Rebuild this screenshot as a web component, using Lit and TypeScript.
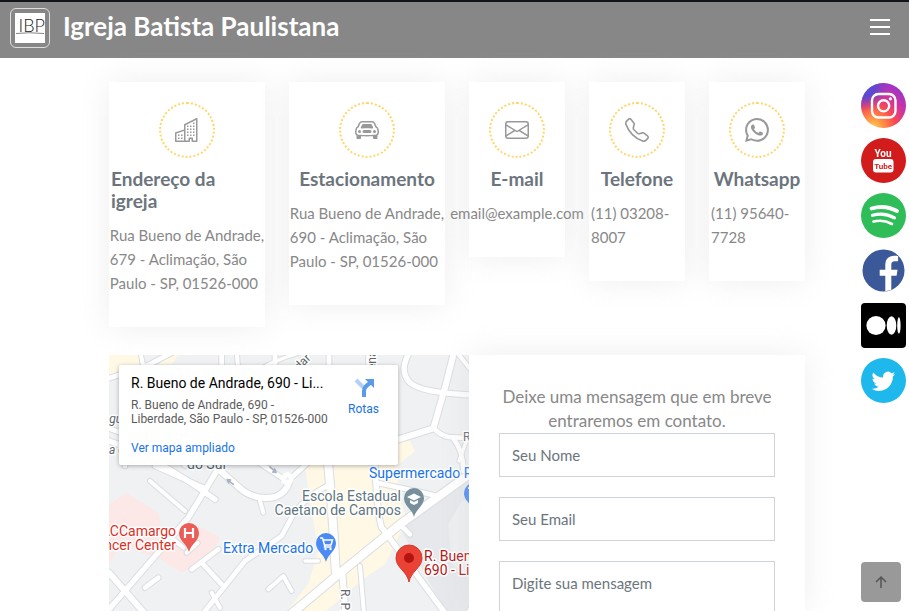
import { LitElement, html, css, svg } from "lit";
import { customElement } from "lit/decorators.js";

const icons = {
  building: svg`<path d="M14.763.075A.5.5 0 0 1 15 .5v15a.5.5 0 0 1-.5.5h-3a.5.5 0 0 1-.5-.5V14h-1v1.5a.5.5 0 0 1-.5.5h-9a.5.5 0 0 1-.5-.5V10a.5.5 0 0 1 .342-.474L6 7.64V4.5a.5.5 0 0 1 .276-.447l8-4a.5.5 0 0 1 .487.022zM6 8.694 1 10.36V15h5V8.694zM7 15h2v-1.5a.5.5 0 0 1 .5-.5h2a.5.5 0 0 1 .5.5V15h2V1.309l-7 3.5V15z"/><path d="M2 11h1v1H2v-1zm2 0h1v1H4v-1zm-2 2h1v1H2v-1zm2 0h1v1H4v-1zm4-4h1v1H8V9zm2 0h1v1h-1V9zm-2 2h1v1H8v-1zm2 0h1v1h-1v-1zm2-2h1v1h-1V9zm0 2h1v1h-1v-1zM8 7h1v1H8V7zm2 0h1v1h-1V7zm2 0h1v1h-1V7zM8 5h1v1H8V5zm2 0h1v1h-1V5zm2 0h1v1h-1V5zm0-2h1v1h-1V3z"/>`,
  car: svg`<path d="M4 9a1 1 0 1 1-2 0 1 1 0 0 1 2 0Zm10 0a1 1 0 1 1-2 0 1 1 0 0 1 2 0ZM6 8a1 1 0 0 0 0 2h4a1 1 0 1 0 0-2H6ZM4.862 4.276 3.906 6.19a.51.51 0 0 0 .497.731c.91-.073 2.35-.17 3.597-.17 1.247 0 2.688.097 3.597.17a.51.51 0 0 0 .497-.731l-.956-1.913A.5.5 0 0 0 10.691 4H5.309a.5.5 0 0 0-.447.276Z"/><path d="M2.52 3.515A2.5 2.5 0 0 1 4.82 2h6.362c1 0 1.904.596 2.298 1.515l.792 1.848c.075.175.21.319.38.404.5.25.855.715.965 1.262l.335 1.679c.033.161.049.325.049.49v.413c0 .814-.39 1.543-1 1.997V13.5a.5.5 0 0 1-.5.5h-2a.5.5 0 0 1-.5-.5v-1.338c-1.292.048-2.745.088-4 .088s-2.708-.04-4-.088V13.5a.5.5 0 0 1-.5.5h-2a.5.5 0 0 1-.5-.5v-1.892c-.61-.454-1-1.183-1-1.997v-.413a2.5 2.5 0 0 1 .049-.49l.335-1.68c.11-.546.465-1.012.964-1.261a.807.807 0 0 0 .381-.404l.792-1.848ZM4.82 3a1.5 1.5 0 0 0-1.379.91l-.792 1.847a1.8 1.8 0 0 1-.853.904.807.807 0 0 0-.43.564L1.03 8.904a1.5 1.5 0 0 0-.03.294v.413c0 .796.62 1.448 1.408 1.484 1.555.07 3.786.155 5.592.155 1.806 0 4.037-.084 5.592-.155A1.479 1.479 0 0 0 15 9.611v-.413c0-.099-.01-.197-.03-.294l-.335-1.68a.807.807 0 0 0-.43-.563 1.807 1.807 0 0 1-.853-.904l-.792-1.848A1.5 1.5 0 0 0 11.18 3H4.82Z"/>`,
  mail: svg`<path d="M0 4a2 2 0 0 1 2-2h12a2 2 0 0 1 2 2v8a2 2 0 0 1-2 2H2a2 2 0 0 1-2-2V4zm2-1a1 1 0 0 0-1 1v.217l7 4.2 7-4.2V4a1 1 0 0 0-1-1H2zm13 2.383-4.758 2.855L15 11.114v-5.73zm-.034 6.878L9.271 8.82 8 9.583 6.728 8.82l-5.694 3.44A1 1 0 0 0 2 13h12a1 1 0 0 0 .966-.739zM1 11.114l4.758-2.876L1 5.383v5.73z"/>`,
  phone: svg`<path d="M3.654 1.328a.678.678 0 0 0-1.015-.063L1.605 2.3c-.483.484-.661 1.169-.45 1.77a17.568 17.568 0 0 0 4.168 6.608 17.569 17.569 0 0 0 6.608 4.168c.601.211 1.286.033 1.77-.45l1.034-1.034a.678.678 0 0 0-.063-1.015l-2.307-1.794a.678.678 0 0 0-.58-.122l-2.19.547a1.745 1.745 0 0 1-1.657-.459L5.482 8.062a1.745 1.745 0 0 1-.46-1.657l.548-2.19a.678.678 0 0 0-.122-.58L3.654 1.328zM1.884.511a1.745 1.745 0 0 1 2.612.163L6.29 2.98c.329.423.445.974.315 1.494l-.547 2.19a.678.678 0 0 0 .178.643l2.457 2.457a.678.678 0 0 0 .644.178l2.189-.547a1.745 1.745 0 0 1 1.494.315l2.306 1.794c.829.645.905 1.87.163 2.611l-1.034 1.034c-.74.74-1.846 1.065-2.877.702a18.634 18.634 0 0 1-7.01-4.42 18.634 18.634 0 0 1-4.42-7.009c-.362-1.03-.037-2.137.703-2.877L1.885.511z"/>`,
  whatsapp: svg`<path d="M13.601 2.326A7.854 7.854 0 0 0 7.994 0C3.627 0 .068 3.558.064 7.926c0 1.399.366 2.76 1.057 3.965L0 16l4.204-1.102a7.933 7.933 0 0 0 3.79.965h.004c4.368 0 7.926-3.558 7.93-7.93A7.898 7.898 0 0 0 13.6 2.326zM7.994 14.521a6.573 6.573 0 0 1-3.356-.92l-.24-.144-2.494.654.666-2.433-.156-.251a6.56 6.56 0 0 1-1.007-3.505c0-3.626 2.957-6.584 6.591-6.584a6.56 6.56 0 0 1 4.66 1.931 6.557 6.557 0 0 1 1.928 4.66c-.004 3.639-2.961 6.592-6.592 6.592zm3.615-4.934c-.197-.099-1.17-.578-1.353-.646-.182-.065-.315-.099-.445.099-.133.197-.513.646-.627.775-.114.133-.232.148-.43.05-.197-.1-.836-.308-1.592-.985-.59-.525-.985-1.175-1.103-1.372-.114-.198-.011-.304.088-.403.087-.088.197-.232.296-.346.1-.114.133-.198.198-.33.065-.134.034-.248-.015-.347-.05-.099-.445-1.076-.612-1.47-.16-.389-.323-.335-.445-.34-.114-.007-.247-.007-.38-.007a.729.729 0 0 0-.529.247c-.182.198-.691.677-.691 1.654 0 .977.71 1.916.81 2.049.098.133 1.394 2.132 3.383 2.992.47.205.84.326 1.129.418.475.152.904.129 1.246.08.38-.058 1.171-.48 1.338-.943.164-.464.164-.86.114-.943-.049-.084-.182-.133-.38-.232z"/>`,
};

const cards = [
  { icon: icons.building, title: "Endereço da igreja", text: "Rua Bueno de Andrade,\n679 - Aclimação, São\nPaulo - SP, 01526-000", wide: true },
  { icon: icons.car, title: "Estacionamento", text: "Rua Bueno de Andrade,\n690 - Aclimação, São\nPaulo - SP, 01526-000", wide: true },
  { icon: icons.mail, title: "E-mail", text: "email@example.com", wide: false },
  { icon: icons.phone, title: "Telefone", text: "(11) 03208-8007", wide: false },
  { icon: icons.whatsapp, title: "Whatsapp", text: "(11) 95640-7728", wide: false },
];

const socials = [
  {
    name: "Instagram",
    art: svg`<defs>
        <radialGradient id="ig" cx="12" cy="45" r="45" gradientUnits="userSpaceOnUse">
          <stop offset="0" stop-color="#ffd35a"/><stop offset=".2" stop-color="#ff9a45"/>
          <stop offset=".5" stop-color="#fb4a50"/><stop offset=".75" stop-color="#cf34a0"/>
          <stop offset="1" stop-color="#a334c4"/>
        </radialGradient>
        <radialGradient id="igb" cx="2" cy="2" r="26" gradientUnits="userSpaceOnUse">
          <stop offset="0" stop-color="#3b5ce0"/><stop offset=".5" stop-color="#5a48d0" stop-opacity=".9"/>
          <stop offset="1" stop-color="#8a3ac8" stop-opacity="0"/>
        </radialGradient>
      </defs>
      <circle cx="22.5" cy="22.5" r="22.5" fill="url(#ig)"/><circle cx="22.5" cy="22.5" r="22.5" fill="url(#igb)"/>
      <rect x="11" y="11" width="23.5" height="23.5" rx="6.5" fill="none" stroke="#fff" stroke-width="2.4"/>
      <circle cx="22.6" cy="22.8" r="5.6" fill="none" stroke="#fff" stroke-width="2.4"/><circle cx="29.4" cy="15.8" r="1.6" fill="#fff"/>`,
  },
  {
    name: "YouTube",
    art: svg`<circle cx="22.5" cy="22.5" r="22.5" fill="#d21b1b"/>
      <text class="yt" x="22" y="19" text-anchor="middle" fill="#fff">You</text>
      <rect x="12" y="21" width="20.5" height="13.5" rx="3" fill="#fff"/>
      <text class="yt tube" x="22.2" y="31" text-anchor="middle" fill="#d21b1b">Tube</text>`,
  },
  {
    name: "Spotify",
    art: svg`<circle cx="22.5" cy="22.5" r="22.5" fill="#2ebd59"/>
      <g fill="none" stroke="#fff" stroke-linecap="round">
        <path d="M10.5 15.5Q24 11.5 36 18" stroke-width="3.8"/><path d="M11.5 22.3Q23 18.9 33.5 24.8" stroke-width="3.2"/><path d="M12.5 28.6Q22 26 31 31" stroke-width="2.6"/>
      </g>`,
  },
  {
    name: "Facebook",
    art: svg`<circle cx="22.5" cy="22.5" r="21" fill="#3b5998"/>
      <path d="M24.3 43.3V27.8h-5.6v-6h5.6V17c0-5.8 3.3-9.3 8.8-9.3 1.9 0 3.1.1 4 .3v5.3h-3.3c-2.6 0-3.5 1.2-3.5 3.500v5h6.2l-.9 6h-5.3v14.300z" fill="#fff"/>`,
  },
  {
    name: "Medium",
    art: svg`<rect width="45" height="45" rx="4" fill="#000"/>
      <g fill="#fff"><circle cx="15" cy="22.5" r="9.6"/><ellipse cx="30.5" cy="22.5" rx="4.8" ry="9.2"/><ellipse cx="37.9" cy="22.5" rx="1.7" ry="8.2"/></g>`,
  },
  {
    name: "Twitter",
    art: svg`<circle cx="22.5" cy="22.5" r="22.5" fill="#1eb8ec"/>
      <g transform="translate(10.6 10.7) scale(1.48)"><path fill="#fff" d="M5.026 15c6.038 0 9.341-5.003 9.341-9.334 0-.14 0-.282-.006-.422A6.685 6.685 0 0 0 16 3.542a6.658 6.658 0 0 1-1.889.518 3.301 3.301 0 0 0 1.447-1.817 6.533 6.533 0 0 1-2.087.793A3.286 3.286 0 0 0 7.875 6.03a9.325 9.325 0 0 1-6.767-3.429 3.289 3.289 0 0 0 1.018 4.382A3.323 3.323 0 0 1 .64 6.575v.045a3.288 3.288 0 0 0 2.632 3.218 3.203 3.203 0 0 1-.865.115 3.23 3.23 0 0 1-.614-.057 3.283 3.283 0 0 0 3.067 2.277A6.588 6.588 0 0 1 .78 13.58a6.32 6.32 0 0 1-.78-.045A9.344 9.344 0 0 0 5.026 15z"/></g>`,
  },
];

// Road centre lines on a grid of a third of a map pixel: [line, width]
const roads: [string, number][] = [
  ["M12 82L130 42L210 0", 14],
  ["M105 0L118 60", 12],
  ["M350 0V60", 14],
  ["M395 0L400 60", 12],
  ["M455 60Q500 30 600 0", 10],
  ["M510 0V60", 14],
  ["M672 0V60", 14],
  ["M790 0V60", 12],
  ["M1062 12L1100 60", 12],
  ["M12 232L60 250V345", 14],
  ["M60 300Q200 290 240 345", 12],
  ["M12 270Q140 310 330 445", 16],
  ["M335 360L250 500L12 775", 16],
  ["M150 345L295 410", 14],
  ["M330 345L405 412Q450 450 510 438Q545 425 553 390", 18],
  ["M440 320L530 380", 14],
  ["M565 375L620 325", 14],
  ["M135 390L240 480", 12],
  ["M475 485L465 450", 12],
  ["M670 345Q683 480 692 660", 24],
  ["M665 405Q600 440 565 490L530 555L420 630L300 780", 14],
  ["M12 665L130 800", 18],
  ["M120 710L160 680", 14],
  ["M260 655L340 595", 14],
  ["M290 635L350 700", 14],
  ["M320 725L345 770", 12],
  ["M490 715L535 675L560 720", 12],
  ["M640 630H600", 10],
  ["M180 545L235 590", 12],
  ["M245 605L278 576", 12],
  ["M545 800L700 670L885 520L1100 365", 24],
  ["M712 665L722 800", 18],
  ["M765 645L778 800", 12],
  ["M880 265L985 232L1020 110L1045 12", 18],
  ["M915 0Q880 60 915 95Q950 125 1100 132", 16],
  ["M985 232Q1010 255 1030 258L1100 262", 14],
  ["M1045 262Q1075 300 1075 360", 14],
  ["M1090 255L1062 330", 10],
  ["M810 340Q815 480 830 530", 16],
  ["M815 395L955 425L995 435", 14],
  ["M835 535L1030 800", 16],
  ["M885 520L915 550", 14],
  ["M1085 790L1100 765", 10],
];

@customElement("app-root")
export class AppRoot extends LitElement {
  static styles = css`
    :host {
      display: flex;
      flex-direction: column;
      height: 100vh;
      overflow: hidden;
      background: #fff;
      color: #888;
      font-family: Lato, "Liberation Sans", sans-serif;
      font-size: 15px;
      line-height: 24px;
    }
    * { box-sizing: border-box; }
    svg { display: block; }
    .bar {
      flex: none;
      display: flex;
      align-items: flex-start;
      padding: 6px 18px 10px 10px;
      border-top: 2px solid #10151a;
      background: #878787;
    }
    .brand { display: flex; gap: 13px; text-decoration: none; color: #fff; }
    .logo { display: flex; padding: 4px; border: 1px solid #ddd; border-radius: 6px; }
    .logo text { font: 300 18px Lato, sans-serif; }
    .site { margin: 0; font-size: 26px; font-weight: 700; line-height: 36px; }
    .burger { margin: 8px 0 0 auto; padding: 0; border: 0; background: none; }
    main {
      flex: 1;
      display: flex;
      flex-direction: column;
      gap: 28px;
      width: 100%;
      max-width: 701px;
      min-height: 0;
      margin: 0 auto;
      padding: 24px 0 0 5px;
    }
    .cards { display: grid; grid-template-columns: repeat(12, 1fr); column-gap: 24px; align-items: start; }
    .card {
      grid-column: span 2;
      display: flex;
      flex-direction: column;
      align-items: center;
      min-width: 0;
      padding: 20px 2px 32px;
      background: #fff;
      box-shadow: 0 0 30px rgba(214, 215, 216, 0.4);
    }
    .card.wide { grid-column: span 3; }
    .card.wide p { white-space: pre; }
    .ring {
      display: grid;
      place-items: center;
      width: 56px;
      height: 56px;
      border: 2px dotted #ffd565;
      border-radius: 50%;
      fill: #999;
    }
    h2 { margin: 10px 0 11px; font-size: 19px; font-weight: 700; line-height: 22px; color: #6c757d; }
    .card p { margin: 0; }
    .contact { flex: 1; min-height: 0; display: grid; grid-template-columns: 15fr 14fr; }
    .map {
      position: relative;
      overflow: hidden;
      background: #eff1f3;
      font-family: Roboto, sans-serif;
      font-size: 12px;
      line-height: 14px;
    }
    .map > svg { width: 100%; height: 100%; }
    .label { font-size: 14px; paint-order: stroke; stroke: #fff; stroke-width: 3px; stroke-linejoin: round; }
    .street { font-size: 12px; fill: #5f6670; }
    .place {
      position: absolute;
      top: 10px;
      left: 10px;
      display: flex;
      justify-content: space-between;
      width: 279px;
      height: 100px;
      padding: 10px 19px 10px 12px;
      border-radius: 2px;
      background: #fff;
      box-shadow: 0 1px 4px rgba(0, 0, 0, 0.3);
      color: #5b5b5b;
    }
    .place h3 { margin: 0 0 7px; font-size: 14px; font-weight: 400; line-height: 16px; color: #000; }
    .place p { margin: 0 0 15px; }
    .place a { color: #1a73e8; text-decoration: none; }
    .info { width: 200px; }
    .route { display: flex; flex-direction: column; align-items: center; gap: 3px; }
    .form {
      position: relative;
      display: flex;
      flex-direction: column;
      gap: 20px;
      min-height: 0;
      padding: 30px;
      background: #fff;
      box-shadow: 0 0 30px rgba(214, 215, 216, 0.4);
    }
    .form p { margin: 0 0 -20px; font-size: 17px; text-align: center; }
    .field {
      flex: none;
      width: 100%;
      height: 44px;
      padding: 0 12px;
      border: 1px solid #ced4da;
      border-radius: 0;
      background: #fff;
      font: inherit;
      color: #212529;
    }
    textarea.field { height: 120px; padding: 9px 12px; resize: none; }
    .field::placeholder { color: #6c757d; opacity: 1; }
    .socials { position: fixed; top: 83px; right: 3px; display: flex; flex-direction: column; gap: 10px; }
    .yt { font: 700 10px Roboto, sans-serif; }
    .tube { font-size: 8px; }
    .top {
      position: fixed;
      right: 8px;
      bottom: 9px;
      display: grid;
      place-items: center;
      width: 40px;
      height: 40px;
      border-radius: 4px;
      background: #999;
    }
  `;

  private pin(x: number, y: number, fill: string, glyph: unknown) {
    return svg`<g transform="translate(${x} ${y})"><path d="M0 29C-2 21-10 18-10 10A10 10 0 0 1 10 10C10 18 2 21 0 29Z" fill=${fill}/>${glyph}</g>`;
  }

  private map() {
    const cart = svg`<path d="M-6 5h2.5l2 7h6.5l1.5-5h-9M-1 12l-.5 2h7" fill="none" stroke="#fff" stroke-width="1.5"/><circle cx="-.5" cy="16" r="1.2" fill="#fff"/><circle cx="4.5" cy="16" r="1.2" fill="#fff"/>`;
    return html`<svg viewBox="0 0 360 256" preserveAspectRatio="xMinYMin slice" role="img" aria-label="Mapa">
      <g transform="translate(-4 -4) scale(.33333)">
        <path fill="#e6e8eb" d="M885 530L1110 360V800H1030z"/>
        <path fill="#edeff1" d="M1030 520L1070 450L1110 440V690L1040 640z"/>
        <path fill="#fff8e5" d="M12 90L115 45V0H12zM600 342H880L930 300L912 265L875 250L880 420L905 510L840 640L780 680L640 800H530L610 700L640 600L610 420zM165 0L230 0L200 40H165z"/>
        <path fill="#fce8e6" d="M12 460L65 425L160 485L170 535L225 570L280 525L345 560L320 610L230 665L160 620L90 600L60 560L12 640z"/>
        <g fill="none" stroke-linecap="round" stroke-linejoin="round">
          ${roads.map(([d, w]) => svg`<path d=${d} stroke="#dadde2" stroke-width=${w + 6}/>`)}
          ${roads.map(([d, w]) => svg`<path d=${d} stroke="#fff" stroke-width=${w}/>`)}
          <circle cx="547" cy="383" r="12" fill="#eff1f3" stroke="#fff" stroke-width="14"/>
          <path d="M385 400L367 386M367 386l4 10M367 386l10 1M495 348L513 364M513 364l-4-10M513 364l-10-1" stroke="#a9b1c4" stroke-width="5"/>
        </g>
      </g>
      <g class="label">
        <text class="street" x="-6" y="68" font-style="italic">agu</text>
        <text class="street" x="0" y="99" font-style="italic">a c</text>
        <text class="street" transform="translate(190 16) rotate(-45)">dar</text>
        <text class="street" transform="translate(267 15) rotate(-90)">ena</text>
        <text class="street" x="354" y="86">R.</text>
        <text class="street" transform="translate(232 234) rotate(90)">R. Pires</text>
        <text x="78" y="114" fill="#546e7a">do Sul</text>
        <text x="260" y="123" fill="#1a73e8">Supermercado R</text>
        <text x="292" y="146" fill="#607580" text-anchor="end">Escola Estadual</text>
        <text x="292" y="160" fill="#607580" text-anchor="end">Caetano de Campos</text>
        <text x="67" y="181" fill="#d93025" text-anchor="end">ACCamargo</text>
        <text x="67" y="195" fill="#d93025" text-anchor="end">Cancer Center</text>
        <text x="114" y="198" fill="#1a73e8">Extra Mercado</text>
        <text x="315" y="206" fill="#b31412">R. Bueno</text>
        <text x="315" y="220" fill="#b31412">690 - Lib</text>
      </g>
      ${this.pin(305, 133, "#78909c", svg`<path d="M-7 9L0 5.5L7 9L0 12.5ZM-4 12v3L0 17L4 15v-3L0 14Z" fill="#fff"/>`)}
      ${this.pin(80, 168, "#ea5e55", svg`<path d="M-4 5V15M4 5V15M-4 10H4" stroke="#fff" stroke-width="2.2" fill="none"/>`)}
      ${this.pin(217, 178, "#4a8af4", cart)}
      ${this.pin(365, 128, "#4a8af4", cart)}
      <path d="M300 227C298 216 287 213 287 203A13 13 0 0 1 313 203C313 213 302 216 300 227Z" fill="#ea4335" stroke="#d23a2e"/>
      <circle cx="300" cy="203" r="5" fill="#b31412"/>
    </svg>`;
  }

  render() {
    return html`
      <header class="bar">
        <a class="brand" href="#">
          <span class="logo">
            <svg width="30" height="30" viewBox="0 0 30 30" aria-hidden="true">
              <rect width="30" height="30" fill="#fff"/>
              <text x="30" y="19" text-anchor="end" fill="#222">IBP</text>
              <path d="M1 20.5Q14 19 29 20.5" stroke="#666" stroke-width=".8" fill="none"/>
            </svg>
          </span>
          <h1 class="site">Igreja Batista Paulistana</h1>
        </a>
        <button class="burger" aria-label="Menu">
          <svg width="22" height="22" viewBox="0 0 22 22"><path d="M1 4H21M1 11H21M1 18H21" stroke="#fff" stroke-width="2"/></svg>
        </button>
      </header>
      <main>
        <section class="cards">
          ${cards.map(
            (c) => html`<article class="card ${c.wide ? "wide" : ""}">
              <span class="ring"><svg width="24" height="24" viewBox="0 0 16 16">${c.icon}</svg></span>
              <h2>${c.title}</h2>
              <p>${c.text}</p>
            </article>`
          )}
        </section>
        <section class="contact">
          <div class="map">
            ${this.map()}
            <div class="place">
              <div class="info">
                <h3>R. Bueno de Andrade, 690 - Li...</h3>
                <p>R. Bueno de Andrade, 690 -<br />Liberdade, São Paulo - SP, 01526-000</p>
                <a href="#">Ver mapa ampliado</a>
              </div>
              <a class="route" href="#">
                <svg width="24" height="24" viewBox="0 0 24 24">
                  <path d="M4 5L12 13" stroke="#b3d0f7" stroke-width="4"/>
                  <path d="M12 22V16Q12 12 18 8" stroke="#5a9ae8" stroke-width="4" fill="none"/>
                  <path d="M13 4H22V13Z" fill="#5a9ae8"/>
                </svg>
                Rotas
              </a>
            </div>
          </div>
          <form class="form">
            <p>Deixe uma mensagem que em breve entraremos em contato.</p>
            <input class="field" type="text" placeholder="Seu Nome" aria-label="Seu Nome" />
            <input class="field" type="email" placeholder="Seu Email" aria-label="Seu Email" />
            <textarea class="field" placeholder="Digite sua mensagem" aria-label="Digite sua mensagem"></textarea>
          </form>
        </section>
      </main>
      <nav class="socials" aria-label="Redes sociais">
        ${socials.map((s) => html`<a href="#" aria-label=${s.name}><svg width="45" height="45" viewBox="0 0 45 45">${s.art}</svg></a>`)}
      </nav>
      <a class="top" href="#" aria-label="Voltar ao topo">
        <svg width="12" height="14" viewBox="0 0 12 14"><path d="M6 13V2M1 7L6 2L11 7" stroke="#555" stroke-width="1.5" fill="none"/></svg>
      </a>
    `;
  }
}
